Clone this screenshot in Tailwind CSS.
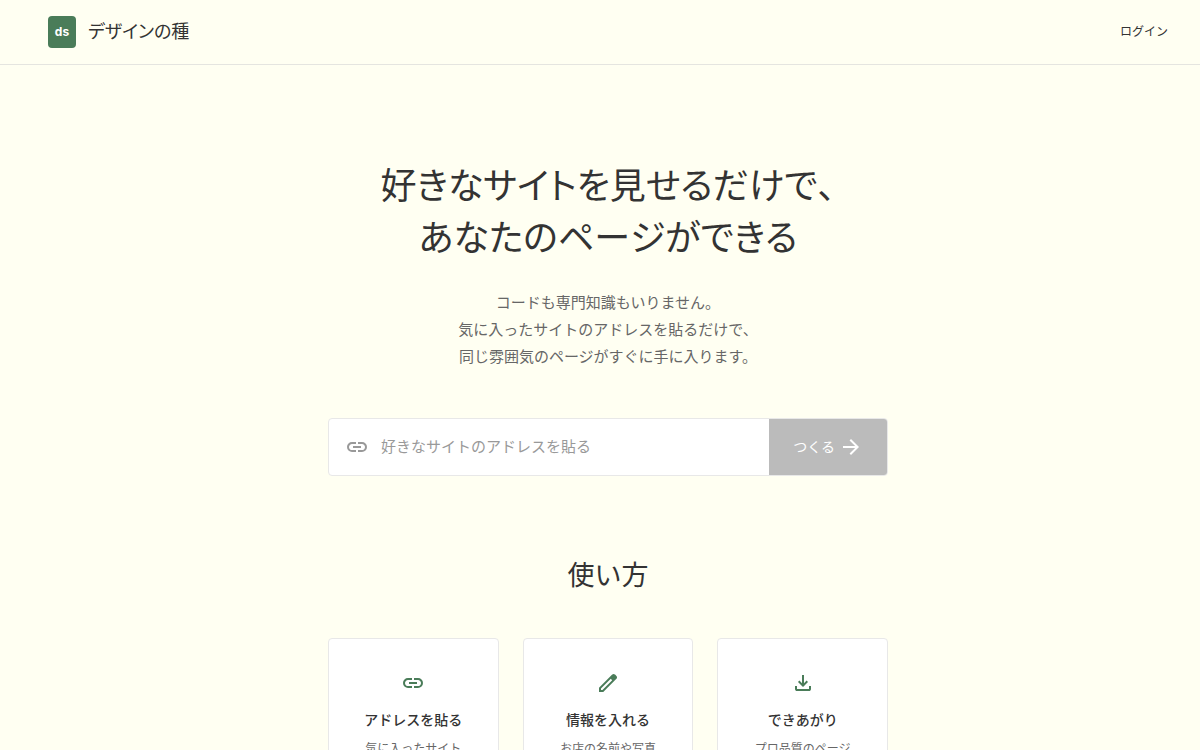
<!DOCTYPE html>
<html lang="ja">
<head>
    <meta charset="UTF-8">
    <meta name="viewport" content="width=device-width, initial-scale=1.0">
    <title>デザインの種</title>
    <script src="https://cdn.jsdelivr.net/npm/@tailwindcss/browser@4"></script>
</head>
<body class="bg-[#fffff2] text-[#333333] font-['Liberation_Sans','Noto_Sans_CJK_JP',sans-serif]">

    <!-- Header -->
    <header class="flex items-center justify-between h-[65px] pl-12 pr-8 border-b border-[#e5e5e0]">
        <a href="#" class="flex items-center gap-3">
            <span class="flex items-center justify-center w-7 h-8 rounded bg-[#4a7c59] text-white text-xs font-bold font-['Inter',sans-serif]">ds</span>
            <span class="text-lg [font-feature-settings:'palt']">デザインの種</span>
        </a>
        <a href="#" class="text-xs">ログイン</a>
    </header>

    <main class="pl-12 pr-8">
        <div class="max-w-[560px] mx-auto pt-24 pb-20">

            <!-- Hero -->
            <section class="text-center">
                <h1 class="text-4xl leading-[52px] [font-feature-settings:'palt'] [font-kerning:none]">好きなサイトを見せるだけで、<br>あなたのページができる</h1>
                <p class="mt-6 text-[15px] leading-[27px] text-[#666666]">コードも専門知識もいりません。<br>気に入ったサイトのアドレスを貼るだけで、<br>同じ雰囲気のページがすぐに手に入ります。</p>
            </section>

            <form class="flex mt-12 h-[58px] bg-white border border-[#e8e8e8] rounded overflow-hidden">
                <label for="url" class="flex items-center pl-4 text-[#999999]" aria-label="サイトのアドレス">
                    <svg class="w-6 h-6" viewBox="0 -960 960 960" fill="currentColor"><path d="M440-280H280q-83 0-141.5-58.5T80-480q0-83 58.5-141.5T280-680h160v80H280q-50 0-85 35t-35 85q0 50 35 85t85 35h160v80ZM320-440v-80h320v80H320Zm200 160v-80h160q50 0 85-35t35-85q0-50-35-85t-85-35H520v-80h160q83 0 141.5 58.5T880-480q0 83-58.5 141.5T680-280H520Z"/></svg>
                </label>
                <input id="url" type="text" placeholder="好きなサイトのアドレスを貼る" class="flex-1 min-w-0 px-3 text-[15px] placeholder:text-[#999999] outline-none">
                <button type="button" disabled class="flex items-center gap-1 px-6 bg-[#bbbbbb] text-white text-sm">
                    つくる
                    <svg class="w-6 h-6" viewBox="0 -960 960 960" fill="currentColor"><path d="M647-440H160v-80h487L423-744l57-56 320 320-320 320-57-56 224-224Z"/></svg>
                </button>
            </form>

            <!-- How to use -->
            <section class="mt-20 text-center">
                <h2 class="text-[27px] leading-10">使い方</h2>
                <div class="grid grid-cols-3 gap-6 mt-[42px]">
                    <div class="px-6 py-8 bg-white border border-[#e8e8e8] rounded">
                        <svg class="w-6 h-6 mx-auto text-[#4a7c59]" viewBox="0 -960 960 960" fill="currentColor"><path d="M440-280H280q-83 0-141.5-58.5T80-480q0-83 58.5-141.5T280-680h160v80H280q-50 0-85 35t-35 85q0 50 35 85t85 35h160v80ZM320-440v-80h320v80H320Zm200 160v-80h160q50 0 85-35t35-85q0-50-35-85t-85-35H520v-80h160q83 0 141.5 58.5T880-480q0 83-58.5 141.5T680-280H520Z"/></svg>
                        <h3 class="mt-3 text-sm leading-[26px] font-medium">アドレスを貼る</h3>
                        <p class="mt-1 text-xs leading-6 text-[#666666]">気に入ったサイト<br>のURLを入力</p>
                    </div>
                    <div class="px-6 py-8 bg-white border border-[#e8e8e8] rounded">
                        <svg class="w-6 h-6 mx-auto text-[#4a7c59]" viewBox="0 -960 960 960" fill="currentColor"><path d="M200-200h57l391-391-57-57-391 391v57Zm-80 80v-170l528-527q12-11 26.5-17t30.5-6q16 0 31 6t26 18l55 56q12 11 17.5 26t5.5 30q0 16-5.5 30.5T817-647L290-120H120Zm640-584-56-56 56 56Zm-141 85-28-29 57 57-29-28Z"/></svg>
                        <h3 class="mt-3 text-sm leading-[26px] font-medium">情報を入れる</h3>
                        <p class="mt-1 text-xs leading-6 text-[#666666]">お店の名前や写真<br>を入れるだけ</p>
                    </div>
                    <div class="px-6 py-8 bg-white border border-[#e8e8e8] rounded">
                        <svg class="w-6 h-6 mx-auto text-[#4a7c59]" viewBox="0 -960 960 960" fill="currentColor"><path d="M480-320 280-520l56-58 104 104v-326h80v326l104-104 56 58-200 200ZM240-160q-33 0-56.5-23.5T160-240v-120h80v120h480v-120h80v120q0 33-23.5 56.5T720-160H240Z"/></svg>
                        <h3 class="mt-3 text-sm leading-[26px] font-medium">できあがり</h3>
                        <p class="mt-1 text-xs leading-6 text-[#666666]">プロ品質のページ<br>がすぐに完成</p>
                    </div>
                </div>
            </section>
        </div>
    </main>

</body>
</html>
